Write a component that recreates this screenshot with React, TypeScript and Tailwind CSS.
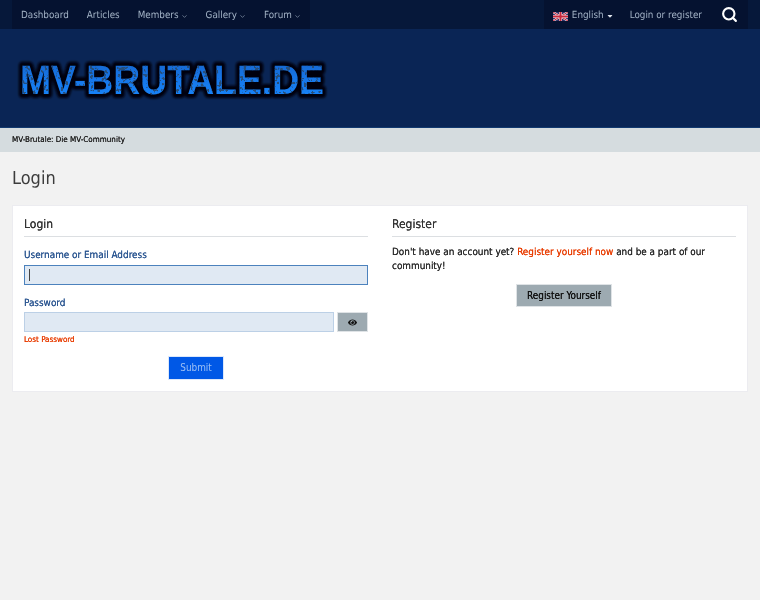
import { Search, ChevronDown } from "lucide-react";
import { FaCaretDown, FaEye } from "react-icons/fa";

function NavItem({ label, chevron }: { label: string; chevron?: boolean }) {
  return (
    <div className="flex items-center h-full px-[9px] gap-[2px] pt-[3px] text-[#a3b3c6]">
      <span>{label}</span>
      {chevron && <ChevronDown size={7} strokeWidth={2} />}
    </div>
  );
}

function Flag() {
  return (
    <svg width="15" height="9" viewBox="0 0 60 36" aria-hidden="true">
      <rect width="60" height="36" fill="#2f3168" />
      <path d="M0 0L60 36M60 0L0 36" stroke="#ece6ea" strokeWidth="8" />
      <path d="M0 0L60 36M60 0L0 36" stroke="#c9283c" strokeWidth="4" />
      <path d="M30 0V36M0 18H60" stroke="#ece6ea" strokeWidth="12" />
      <path d="M30 0V36M0 18H60" stroke="#c9283c" strokeWidth="8" />
    </svg>
  );
}

function Logo() {
  return (
    <svg width="345" height="50" viewBox="0 0 345 50" aria-label="MV-BRUTALE.DE">
      <defs>
        <linearGradient id="lg" x1="0" y1="0" x2="0" y2="1">
          <stop offset="0" stopColor="#1063c8" />
          <stop offset="0.5" stopColor="#1877ea" />
          <stop offset="1" stopColor="#1a88ff" />
        </linearGradient>
        <filter id="grunge" x="-5%" y="-20%" width="110%" height="140%">
          <feTurbulence type="fractalNoise" baseFrequency="0.28" numOctaves="2" seed="4" result="n" />
          <feColorMatrix in="n" type="matrix" values="0 0 0 0 0.02  0 0 0 0 0.08  0 0 0 0 0.2  0 0 0 -14 6.2" result="spots" />
          <feComposite in="spots" in2="SourceAlpha" operator="in" result="inner" />
          <feMerge>
            <feMergeNode in="SourceGraphic" />
            <feMergeNode in="inner" />
          </feMerge>
        </filter>
        <filter id="soft" x="-5%" y="-30%" width="110%" height="160%">
          <feGaussianBlur stdDeviation="1" />
        </filter>
      </defs>
      <text
        x="5"
        y="41"
        textLength="304"
        lengthAdjust="spacingAndGlyphs"
        fontFamily="'Liberation Sans', sans-serif"
        fontWeight="700"
        fontSize="41"
        fill="#01060f"
        stroke="#01060f"
        strokeWidth="8"
        strokeLinejoin="round"
        filter="url(#soft)"
        aria-hidden="true"
      >
        MV-BRUTALE.DE
      </text>
      <text
        x="5"
        y="41"
        textLength="304"
        lengthAdjust="spacingAndGlyphs"
        fontFamily="'Liberation Sans', sans-serif"
        fontWeight="700"
        fontSize="41"
        fill="url(#lg)"
        filter="url(#grunge)"
      >
        MV-BRUTALE.DE
      </text>
    </svg>
  );
}

const bolder = "[text-shadow:0_0_0.6px_currentColor]";

export default function App() {
  return (
    <div className="min-h-[600px] bg-[#f2f2f2] text-[#222] text-[9.9px] [text-rendering:geometricPrecision] font-['DejaVu_Sans_Condensed','DejaVu_Sans',sans-serif] blur-[0.35px]">
      <div className="h-[29px] bg-[#06183a] flex justify-between pl-[12px] pr-[12px] text-[9.8px]">
        <nav className="flex h-full bg-[#051230] items-center">
          <NavItem label="Dashboard" />
          <NavItem label="Articles" />
          <NavItem label="Members" chevron />
          <NavItem label="Gallery" chevron />
          <NavItem label="Forum" chevron />
        </nav>
        <div className="flex h-full bg-[#051230] items-center pl-[9px] text-[#a3b3c6]">
          <div className="flex items-center gap-[4px] mr-[16px] pt-[3px]">
            <Flag />
            <span>English</span>
            <FaCaretDown size={8} className="-ml-[2px] text-[#dfe5ec]" />
          </div>
          <span className="mr-[19px] pt-[3px]">Login or register</span>
          <Search size={17} strokeWidth={3} className="text-white mr-[10px]" />
        </div>
      </div>
      <div className="h-[98px] bg-[#0a2555] flex items-center pl-[15px]">
        <Logo />
      </div>
      <div className={`h-[25px] bg-[#d5dcdf] border-t border-[#123a70] flex items-center px-[12px] text-[8px] text-[#222] ${bolder}`}>
        MV-Brutale: Die MV-Community
      </div>
      <div className="px-[12px] pt-[16px]">
        <h1 className="text-[18px] leading-[22px] text-[#3c3c3c]">Login</h1>
        <div className="mt-[15px] h-[187px] bg-white border border-[#ececf0] flex gap-[24px] px-[11px] pt-[10px]">
          <div className="flex-1 flex flex-col">
            <h2 className={`text-[12px] leading-[16px] text-[#333] pb-[4px] border-b border-[#dcdfe2] ${bolder}`}>Login</h2>
            <label className={`mt-[12px] leading-[13px] text-[#2a5590] ${bolder}`}>Username or Email Address</label>
            <div className="mt-[3px] h-[20px] bg-[#e0e9f3] border border-[#4c82bd] flex items-center pl-[4px]">
              <span className="w-px h-[12px] bg-[#444]" />
            </div>
            <label className={`mt-[12px] leading-[13px] text-[#2a5590] ${bolder}`}>Password</label>
            <div className="mt-[2px] flex gap-[3px]">
              <div className="flex-1 h-[20px] bg-[#e0e9f3] border border-[#bcd0e6]" />
              <div className="w-[31px] h-[20px] bg-[#9daab1] border border-[#dfe3e6] flex items-center justify-center text-[#111]">
                <FaEye size={9} />
              </div>
            </div>
            <a className={`mt-[2px] text-[8px] leading-[11px] text-[#e83c00] ${bolder}`}>Lost Password</a>
            <div className="mt-[11px] flex justify-center">
              <button className="w-[56px] h-[24px] bg-[#0058e6] border border-[#dce8fb] text-[#9cc0f5]">Submit</button>
            </div>
          </div>
          <div className="flex-1 flex flex-col">
            <h2 className={`text-[12px] leading-[16px] text-[#333] pb-[4px] border-b border-[#dcdfe2] ${bolder}`}>Register</h2>
            <p className={`mt-[9px] leading-[14px] text-[#2a2a2a] ${bolder}`}>
              Don't have an account yet?{" "}
              <a className="text-[#e83c00]">Register yourself now</a> and be a part of our community!
            </p>
            <div className="mt-[10px] flex justify-center">
              <button className={`w-[96px] h-[23px] pt-px bg-[#9daab1] border border-[#dfe3e6] text-[#111] ${bolder}`}>Register Yourself</button>
            </div>
          </div>
        </div>
      </div>
    </div>
  );
}
